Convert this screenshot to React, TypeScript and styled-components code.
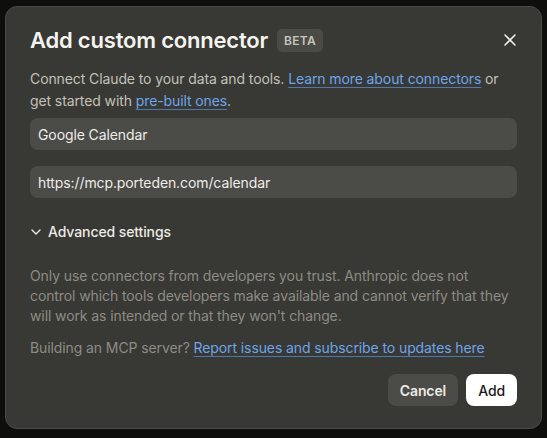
import { FC } from 'react'
import styled, { createGlobalStyle } from 'styled-components'

const GlobalStyle = createGlobalStyle`
  html, body {
    margin: 0;
    padding: 0;
    background: #0e0e0d;
    font-family: Inter, "Noto Sans", sans-serif;
  }
`

const Page = styled.div`
  width: 547px;
  height: 438px;
  padding: 6px 0 0 5px;
  box-sizing: border-box;
`

const Modal = styled.div`
  width: 537px;
  height: 423px;
  box-sizing: border-box;
  background: #383834;
  border: 1px solid #4a4a46;
  border-radius: 12px;
  padding: 19px 24px 0 24px;
  display: flex;
  flex-direction: column;
  & > * {
    flex-shrink: 0;
  }
`

const Header = styled.div`
  display: flex;
  align-items: center;
  height: 28px;
`

const Title = styled.h2`
  margin: 0;
  font-size: 22px;
  font-weight: 600;
  color: #f5f4ef;
  letter-spacing: -0.2px;
`

const Badge = styled.span`
  margin-left: 9px;
  background: #4a4a46;
  color: #c7c5bc;
  font-size: 12px;
  font-weight: 600;
  border-radius: 5px;
  padding: 4px 7px;
  letter-spacing: 0.3px;
`

const CloseButton = styled.button`
  margin-left: auto;
  margin-right: -1px;
  background: none;
  border: none;
  padding: 0;
  width: 16px;
  height: 16px;
  display: flex;
  align-items: center;
  justify-content: center;
  cursor: pointer;
`

const Description = styled.p`
  margin: 14px 0 0 0;
  font-size: 14px;
  letter-spacing: -0.1px;
  line-height: 22px;
  color: #c3c1b8;
`

const Link = styled.a`
  color: #6ea5ea;
  text-decoration: underline;
  text-underline-offset: 3px;
  text-decoration-color: #4f79ad;
`

const Input = styled.div`
  margin-top: 16px;
  height: 32px;
  box-sizing: border-box;
  background: #4b4b48;
  border-radius: 8px;
  padding: 0 8px;
  display: flex;
  align-items: center;
  font-size: 14px;
  letter-spacing: -0.1px;
  color: #eeede7;
  ${Description} + & {
    margin-top: 6px;
  }
`

const Toggle = styled.div`
  margin-top: 25px;
  display: flex;
  align-items: center;
  gap: 6px;
  font-size: 14px;
  letter-spacing: -0.1px;
  font-weight: 500;
  color: #ecebe5;
`

const Notice = styled.p`
  margin: 26px 0 0 0;
  font-size: 14px;
  letter-spacing: -0.1px;
  line-height: 20px;
  color: #8e8c85;
  & + & {
    margin-top: 12px;
  }
`

const Footer = styled.div`
  margin-top: 16px;
  display: flex;
  justify-content: flex-end;
  gap: 8px;
`

const Button = styled.button<{ $primary?: boolean }>`
  height: 32px;
  border: none;
  border-radius: 8px;
  padding: 0 12px;
  font-family: inherit;
  font-size: 14px;
  letter-spacing: -0.1px;
  font-weight: ${(p) => (p.$primary ? 500 : 600)};
  background: ${(p) => (p.$primary ? '#ffffff' : '#4b4b48')};
  color: ${(p) => (p.$primary ? '#1a1a18' : '#ecebe5')};
  cursor: pointer;
`

const App: FC = () => {
  return (
    <>
      <GlobalStyle />
      <Page>
        <Modal>
          <Header>
            <Title>Add custom connector</Title>
            <Badge>BETA</Badge>
            <CloseButton title="close">
              <svg width="14" height="14" viewBox="0 0 14 14">
                <path d="M2 2L12 12M12 2L2 12" stroke="#f0efe9" strokeWidth="1.6" strokeLinecap="round" />
              </svg>
            </CloseButton>
          </Header>
          <Description>
            Connect Claude to your data and tools. <Link href="#">Learn more about connectors</Link> or get
            started with <Link href="#">pre-built ones</Link>.
          </Description>
          <Input>Google Calendar</Input>
          <Input>https://mcp.porteden.com/calendar</Input>
          <Toggle>
            <svg width="12" height="12" viewBox="0 0 12 12">
              <path d="M2 4L6 8L10 4" stroke="#ecebe5" strokeWidth="1.4" fill="none" strokeLinecap="round" strokeLinejoin="round" />
            </svg>
            Advanced settings
          </Toggle>
          <Notice>
            Only use connectors from developers you trust. Anthropic does not control which tools developers make
            available and cannot verify that they will work as intended or that they won't change.
          </Notice>
          <Notice>
            Building an MCP server? <Link href="#">Report issues and subscribe to updates here</Link>
          </Notice>
          <Footer>
            <Button>Cancel</Button>
            <Button $primary>Add</Button>
          </Footer>
        </Modal>
      </Page>
    </>
  )
}

export default App
